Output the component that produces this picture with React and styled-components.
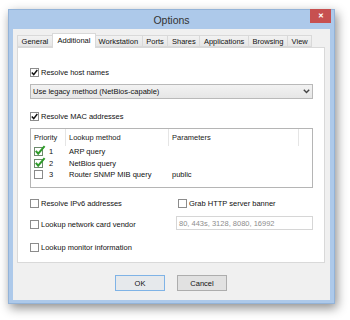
import React from 'react';
import styled, { createGlobalStyle } from 'styled-components';

const tabs = ['General', 'Additional', 'Workstation', 'Ports', 'Shares', 'Applications', 'Browsing', 'View'];

const methods = [
  { priority: 1, name: 'ARP query', params: '', on: true },
  { priority: 2, name: 'NetBios query', params: '', on: true },
  { priority: 3, name: 'Router SNMP MIB query', params: 'public', on: false },
];

function CheckBox({ checked }) {
  return (
    <Box>
      {checked ? (
        <svg width="7" height="7" viewBox="0 0 7 7">
          <path d="M0.8 3.6 L2.7 5.6 L6.3 1" fill="none" stroke="#111" strokeWidth="1.5" />
        </svg>
      ) : null}
    </Box>
  );
}

function GreenCheck({ checked }) {
  return (
    <svg width="12" height="11" viewBox="0 0 12 11">
      <rect x="0.5" y="2.5" width="8" height="8" fill="#fff" stroke={checked ? '#6c8a6c' : '#8a8a8a'} />
      {checked ? (
        <path d="M1.8 5.8 L4.2 8.6 L10.6 1.2" fill="none" stroke="#2f9b2a" strokeWidth="2" />
      ) : null}
    </svg>
  );
}

function Check({ checked, children }) {
  return (
    <CheckRow>
      <CheckBox checked={checked} />
      <span>{children}</span>
    </CheckRow>
  );
}

function App() {
  return (
    <Page>
      <GlobalStyle />
      <Window>
        <TitleBar>
          <Title>Options</Title>
          <Close>✕</Close>
        </TitleBar>
        <Client>
          <TabStrip>
            {tabs.map((t) => (
              <Tab key={t} $active={t === 'Additional'}>{t}</Tab>
            ))}
          </TabStrip>
          <Panel>
            <Check checked>Resolve host names</Check>
            <Select>
              <span>Use legacy method (NetBios-capable)</span>
              <svg width="7" height="5" viewBox="0 0 7 5">
                <path d="M0.8 0.8 L3.5 3.6 L6.2 0.8" fill="none" stroke="#444" strokeWidth="1.4" />
              </svg>
            </Select>
            <Spaced $top={12}>
              <Check checked>Resolve MAC addresses</Check>
            </Spaced>
            <List>
              <ListHeader>
                <HeadCell>Priority</HeadCell>
                <HeadCell>Lookup method</HeadCell>
                <HeadCell>Parameters</HeadCell>
                <HeadCell />
              </ListHeader>
              {methods.map((m) => (
                <ListRow key={m.priority}>
                  <Cell>
                    <GreenCheck checked={m.on} />
                    <Num>{m.priority}</Num>
                  </Cell>
                  <Cell>{m.name}</Cell>
                  <Cell>{m.params}</Cell>
                  <Cell />
                </ListRow>
              ))}
            </List>
            <Options>
              <Check>Resolve IPv6 addresses</Check>
              <RightCheck>
                <Check>Grab HTTP server banner</Check>
              </RightCheck>
              <Check>Lookup network card vendor</Check>
              <TextBox>80, 443s, 3128, 8080, 16992</TextBox>
              <Check>Lookup monitor information</Check>
            </Options>
          </Panel>
          <Buttons>
            <Button $default>OK</Button>
            <Button>Cancel</Button>
          </Buttons>
        </Client>
      </Window>
    </Page>
  );
}

const GlobalStyle = createGlobalStyle`
  body {
    margin: 0;
    background: #fff;
    font-family: "Liberation Sans", Arial, sans-serif;
    color: #111;
  }
`;

const Page = styled.div`
  width: 350px;
  height: 320px;
  padding: 9px 0 0 8px;
  box-sizing: border-box;
  overflow: hidden;
`;

const Window = styled.div`
  width: 327px;
  height: 295px;
  box-sizing: border-box;
  background: #adc9ea;
  border: 1px solid #93b3d8;
  box-shadow: 2px 4px 10px rgba(0, 0, 0, 0.45);
  display: flex;
  flex-direction: column;
`;

const TitleBar = styled.div`
  height: 19px;
  display: grid;
  grid-template-columns: 1fr auto 1fr;
  align-items: center;
`;

const Title = styled.div`
  grid-column: 2;
  font-size: 10.5px;
  color: #333;
  padding-top: 1px;
`;

const Close = styled.div`
  grid-column: 3;
  justify-self: end;
  align-self: start;
  margin: -1px 3px 0 0;
  width: 21px;
  height: 14px;
  background: #c75050;
  color: #fff;
  font-size: 7px;
  font-weight: bold;
  display: flex;
  align-items: center;
  justify-content: center;
`;

const Client = styled.div`
  flex: 1;
  margin: 0 4px 3px 4px;
  background: #f0f0f0;
  padding: 4px 5px 0 4px;
  display: flex;
  flex-direction: column;
`;

const TabStrip = styled.div`
  height: 14px;
  display: flex;
  align-items: flex-end;
`;

const Tab = styled.div`
  position: relative;
  box-sizing: border-box;
  height: ${(p) => (p.$active ? '15px' : '12px')};
  margin: ${(p) => (p.$active ? '0 -1px -1px -1px' : '0')};
  padding: ${(p) => (p.$active ? '0 4.6px 2px' : '0 3.6px')};
  z-index: ${(p) => (p.$active ? 1 : 0)};
  border: 1px solid #d9d9d9;
  border-bottom: ${(p) => (p.$active ? 'none' : '1px solid #d9d9d9')};
  margin-left: -1px;
  background: ${(p) => (p.$active ? '#fff' : 'linear-gradient(#f2f2f2, #e6e6e6)')};
  font-size: 7.5px;
  display: flex;
  align-items: center;
  white-space: nowrap;

  &:first-child {
    margin-left: 0;
  }
`;

const Panel = styled.div`
  height: 216px;
  box-sizing: border-box;
  background: #fff;
  border: 1px solid #d9d9d9;
  padding: 19px 11px 0 12px;
  display: flex;
  flex-direction: column;
`;

const CheckRow = styled.div`
  height: 10px;
  display: flex;
  align-items: center;
  gap: 2px;
  font-size: 7.5px;
  white-space: nowrap;
`;

const Box = styled.div`
  width: 9px;
  height: 9px;
  box-sizing: border-box;
  border: 1px solid #8c8c8c;
  background: #fff;
  display: flex;
  align-items: center;
  justify-content: center;
  flex-shrink: 0;
`;

const Select = styled.div`
  margin-top: 7px;
  height: 15px;
  box-sizing: border-box;
  border: 1px solid #b9b9b9;
  background: linear-gradient(#f2f2f2, #e6e6e6);
  display: flex;
  align-items: center;
  justify-content: space-between;
  padding: 0 2px 0 2px;
  font-size: 7.5px;
`;

const Spaced = styled.div`
  margin-top: ${(p) => p.$top}px;
`;

const List = styled.div`
  margin-top: 7px;
  height: 60px;
  box-sizing: border-box;
  border: 1px solid #b5b5b5;
  background: #fff;
  font-size: 7.5px;
`;

const ListHeader = styled.div`
  height: 17px;
  display: grid;
  grid-template-columns: 35px 103px 130px 1fr;
`;

const HeadCell = styled.div`
  border-right: 1px solid #e5e5e5;
  padding-left: 3px;
  display: flex;
  align-items: center;
  color: #222;

  &:last-child {
    border-right: none;
  }
`;

const ListRow = styled.div`
  height: 11.5px;
  display: grid;
  grid-template-columns: 35px 103px 130px 1fr;
`;

const Cell = styled.div`
  padding-left: 3px;
  display: flex;
  align-items: center;
  white-space: nowrap;

  svg {
    margin-top: -2px;
  }
`;

const Num = styled.span`
  margin-left: 3px;
`;

const Options = styled.div`
  margin-top: 10px;
  display: grid;
  grid-template-columns: 146px 1fr;
  grid-template-rows: 18px 26px 10px;
  align-items: start;

  & > div:nth-child(3) {
    margin-top: 3px;
  }
`;

const RightCheck = styled.div`
  padding-left: 2px;
`;

const TextBox = styled.div`
  height: 14px;
  box-sizing: border-box;
  border: 1px solid #d6d6d6;
  padding: 0 2px;
  display: flex;
  align-items: center;
  font-size: 7.5px;
  color: #8d8d8d;
`;

const Buttons = styled.div`
  margin-top: 12px;
  display: flex;
  justify-content: center;
  gap: 12px;
`;

const Button = styled.button`
  width: 50px;
  height: 16px;
  padding: 0;
  box-sizing: border-box;
  border: 1px solid ${(p) => (p.$default ? '#7fb3e6' : '#adadad')};
  background: ${(p) => (p.$default ? '#e6e9ec' : '#e1e1e1')};
  font-family: inherit;
  font-size: 7.5px;
  color: #111;
`;

export default App;
